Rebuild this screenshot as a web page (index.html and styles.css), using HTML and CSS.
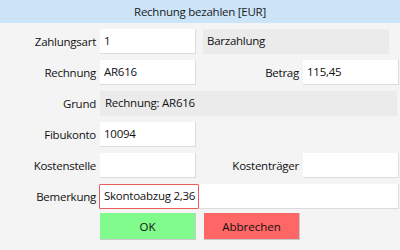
FILE: index.html
```html
<!DOCTYPE html>
<html lang="de">
<head>
<meta charset="utf-8">
<title>Rechnung bezahlen</title>
<link rel="stylesheet" href="styles.css">
</head>
<body>
<div class="dialog">
  <div class="title">Rechnung bezahlen [EUR]</div>
  <div class="form">
    <label class="lbl">Zahlungsart</label>
    <div class="field">1</div>
    <div class="field ro span2">Barzahlung</div>

    <label class="lbl">Rechnung</label>
    <div class="field">AR616</div>
    <label class="lbl">Betrag</label>
    <div class="field">115,45</div>

    <label class="lbl">Grund</label>
    <div class="field ro span3 grund">Rechnung: AR616</div>

    <label class="lbl">Fibukonto</label>
    <div class="field">10094</div>
    <div class="empty"></div>
    <div class="empty"></div>

    <label class="lbl">Kostenstelle</label>
    <div class="field"></div>
    <label class="lbl">Kostenträger</label>
    <div class="field"></div>

    <label class="lbl">Bemerkung</label>
    <div class="field span3 bem"><span class="mark">Skontoabzug 2,36</span></div>

    <div class="empty"></div>
    <button class="btn ok">OK</button>
    <button class="btn cancel">Abbrechen</button>
  </div>
</div>
</body>
</html>
```
FILE: styles.css
```css
html, body {
  margin: 0;
  padding: 0;
  background: #f4f4f4;
}
body {
  font-family: "Open Sans", "Noto Sans", sans-serif;
  font-size: 11.5px;
  letter-spacing: -0.25px;
  color: #111;
  width: 400px;
  height: 250px;
  overflow: hidden;
}
.title {
  height: 23px;
  line-height: 23px;
  background: #cce4f8;
  text-align: center;
  color: #1a1a1a;
}
.form {
  display: grid;
  grid-template-columns: 100px 103px 100px 97px;
  grid-auto-rows: 25px;
  row-gap: 6px;
  padding-top: 6px;
}
.lbl {
  text-align: right;
  padding-right: 4px;
  line-height: 25px;
  white-space: nowrap;
}
.field {
  width: 96px;
  height: 25px;
  box-sizing: border-box;
  background: #fff;
  border-right: 1px solid #dcdcdc;
  border-bottom: 1px solid #dcdcdc;
  padding-left: 4px;
  line-height: 24px;
  white-space: nowrap;
}
.field.ro {
  background: #ebebeb;
  border: none;
}
.span2 {
  grid-column: span 2;
  width: 186px;
}
.span3 {
  grid-column: span 3;
}
.grund {
  width: 297px;
  padding-left: 5px;
}
.bem {
  width: 300px;
  margin-left: -1px;
  padding-left: 0;
  display: flex;
}
.mark {
  width: 100px;
  height: 25px;
  box-sizing: border-box;
  border: 1px solid #ea5e5e;
  border-radius: 1px;
  padding-left: 4px;
  line-height: 22px;
}
.btn {
  width: 96px;
  height: 27px;
  margin-top: -2px;
  border: none;
  border-right: 1px solid #c8c8c8;
  border-bottom: 1px solid #c8c8c8;
  font: inherit;
  color: #111;
  padding: 0;
}
.ok {
  background: #80fb8c;
}
.cancel {
  background: #ff6666;
  grid-column: span 2;
  margin-left: 1px;
}
```
